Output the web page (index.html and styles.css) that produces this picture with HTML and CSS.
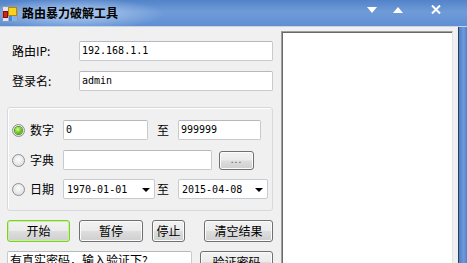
FILE: index.html
```html
<!DOCTYPE html>
<html lang="zh-CN">
<head>
<meta charset="utf-8">
<title>路由暴力破解工具</title>
<link rel="stylesheet" href="styles.css">
</head>
<body>
<div class="window">
  <div class="titlebar">
    <svg class="app-icon" width="16" height="16" viewBox="0 0 16 16">
      <rect x="0.5" y="0.5" width="15" height="15" fill="#dfe6ee" stroke="#8a9bb0"/>
      <rect x="1.5" y="5.5" width="4" height="6" fill="#d42020" stroke="#801010"/>
      <rect x="6.5" y="1.5" width="8" height="8" fill="#f7d21e" stroke="#b08a10"/>
      <rect x="6.5" y="10" width="4" height="5" fill="#4a86d8"/>
      <rect x="11" y="10" width="4" height="5" fill="#7fb0e8"/>
    </svg>
    <span class="title">路由暴力破解工具</span>
    <div class="controls">
      <svg class="ctl ctl-down" width="10" height="6" viewBox="0 0 10 6"><path d="M0 0H10L5 6Z" fill="#fff"/></svg>
      <svg class="ctl ctl-up" width="10" height="6" viewBox="0 0 10 6"><path d="M0 6H10L5 0Z" fill="#fff"/></svg>
      <svg class="ctl ctl-close" width="10" height="9" viewBox="0 0 10 9"><path d="M1 0.5L9 8.5M9 0.5L1 8.5" stroke="#fff" stroke-width="2"/></svg>
    </div>
  </div>
  <div class="client">
    <div class="left">
      <div class="field-row">
        <span class="field-label">路由IP:</span>
        <div class="textbox wide mono">192.168.1.1</div>
      </div>
      <div class="field-row">
        <span class="field-label">登录名:</span>
        <div class="textbox wide mono">admin</div>
      </div>
      <div class="groupbox">
        <div class="g-row">
          <span class="radio checked"></span>
          <span class="r-label">数字</span>
          <div class="textbox num mono">0</div>
          <span class="to">至</span>
          <div class="textbox num2 mono">999999</div>
        </div>
        <div class="g-row">
          <span class="radio"></span>
          <span class="r-label">字典</span>
          <div class="textbox dict"></div>
          <div class="button dots">...</div>
        </div>
        <div class="g-row date-row">
          <span class="radio"></span>
          <span class="r-label">日期</span>
          <div class="datebox d1"><span class="mono">1970-01-01</span><span class="arrow"></span></div>
          <span class="to to-date">至</span>
          <div class="datebox d2"><span class="mono">2015-04-08</span><span class="arrow"></span></div>
        </div>
      </div>
      <div class="btn-row">
        <div class="button start">开始</div>
        <div class="button pause">暂停</div>
        <div class="button stop">停止</div>
        <div class="button clear">清空结果</div>
      </div>
      <div class="verify-row">
        <div class="textbox verify">有真实密码，输入验证下?</div>
        <div class="button verify-btn">验证密码</div>
      </div>
    </div>
    <div class="output"></div>
    <div class="gap"></div>
    <div class="frame"></div>
  </div>
</div>
</body>
</html>
```

FILE: styles.css
```css
* { box-sizing: border-box; }
html, body { margin: 0; padding: 0; }
body {
  width: 467px;
  height: 263px;
  overflow: hidden;
  background: #f0f0f0;
  font-family: "Noto Sans CJK SC", "Noto Sans", sans-serif;
  font-size: 12px;
  color: #000;
}
.window { width: 467px; height: 263px; display: flex; flex-direction: column; }

.titlebar {
  height: 27px;
  flex: none;
  display: flex;
  align-items: center;
  position: relative;
  background:
    radial-gradient(ellipse 90px 16px at 75px 14px, rgba(190,214,244,0.85), rgba(190,214,244,0) 100%),
    linear-gradient(#5283c9 0%, #6f9bd8 45%, #5f8fd3 100%);
  border-bottom: 1px solid #c9d4e2;
}
.app-icon { margin-left: 2px; margin-top: 1px; flex: none; }
.title { margin-left: 4px; font-weight: bold; font-size: 12px; line-height: 14px; letter-spacing: 0; }
.controls { margin-left: auto; display: flex; align-items: center; height: 27px; }
.ctl { display: block; }
.ctl-down { margin-right: 16px; margin-top: -6px; }
.ctl-up { margin-right: 28px; margin-top: -6px; }
.ctl-close { margin-right: 26px; margin-top: -8px; }

.client { flex: 1; display: flex; min-height: 0; background: #f0f0f0; }
.left { width: 281px; flex: none; padding: 14px 0 0 7px; }

.mono { font-family: "DejaVu Sans Mono", "Liberation Mono", monospace; font-size: 10px; }

.field-row { display: flex; align-items: center; height: 20px; margin-bottom: 10px; }
.field-label { width: 72px; padding-left: 5px; line-height: 14px; }
.textbox {
  height: 20px;
  background: #fff;
  border: 1px solid #c7cbd0;
  border-top-color: #b5b9be;
  border-radius: 2px;
  padding: 2px 0 0 2px;
  line-height: 14px;
}
.textbox.wide { width: 194px; }
.field-row + .groupbox { margin-top: 6px; }
.field-row:nth-of-type(2) { margin-bottom: 16px; }

.groupbox {
  width: 266px;
  height: 104px;
  border: 1px solid #d5d9de;
  border-radius: 3px;
  box-shadow: inset 1px 1px 0 #fff;
  padding: 12px 0 0 4px;
}
.g-row { display: flex; align-items: center; height: 20px; margin-bottom: 10px; }
.g-row.date-row { margin-top: -1px; }
.radio {
  width: 13px; height: 13px; flex: none;
  border-radius: 50%;
  border: 1px solid #8e8f8f;
  background: radial-gradient(circle at 50% 40%, #fdfdfd 0%, #e6e6e6 60%, #d0d0d0 100%);
  position: relative;
}
.radio.checked::after {
  content: "";
  position: absolute;
  left: 2px; top: 2px;
  width: 7px; height: 7px;
  border-radius: 50%;
  background: radial-gradient(circle at 40% 35%, #d8ff9a 0%, #6cc419 55%, #2f8a0a 100%);
  box-shadow: 0 0 0 1px #4a9a18;
}
.r-label { width: 38px; padding-left: 5px; line-height: 14px; }
.textbox.num { width: 85px; }
.to { margin: 0 9px 0 9px; line-height: 14px; }
.to.to-date { margin-left: 2px; }
.textbox.num2 { width: 83px; }
.textbox.dict { width: 149px; }

.button {
  height: 22px;
  border: 1px solid #707070;
  border-radius: 3px;
  background: linear-gradient(#f2f2f2 0%, #ebebeb 48%, #dddddd 52%, #cfcfcf 100%);
  box-shadow: inset 0 0 0 1px #fcfcfc;
  display: flex; align-items: center; justify-content: center;
  line-height: 14px;
}
.button.dots { width: 35px; height: 19px; margin-left: 7px; font-size: 10px; color: #555; letter-spacing: 1px; padding-bottom: 2px; }

.datebox {
  height: 20px;
  background: #fff;
  border: 1px solid #c7cbd0;
  border-radius: 2px;
  display: flex; align-items: center;
  padding-left: 3px;
  position: relative;
}
.datebox.d1 { width: 92px; }
.datebox.d2 { width: 90px; }
.arrow {
  position: absolute;
  right: 4px; top: 8px;
  width: 0; height: 0;
  border-left: 4px solid transparent;
  border-right: 4px solid transparent;
  border-top: 4px solid #000;
}

.btn-row { display: flex; margin-top: 9px; height: 22px; }
.button.start {
  width: 63px;
  border-color: #7ccf2f;
  box-shadow: inset 0 0 0 1px #c6f09a;
}
.button.pause { width: 64px; margin-left: 9px; }
.button.stop { width: 33px; margin-left: 9px; }
.button.clear { width: 69px; margin-left: 19px; }

.verify-row { display: flex; margin-top: 9px; height: 22px; }
.textbox.verify {
  width: 185px; height: 22px;
  font-family: "Noto Sans CJK SC", sans-serif; font-size: 12px;
  padding: 1px 0 0 2px; border-radius: 2px;
}
.button.verify-btn { width: 73px; margin-left: 8px; }

.output {
  width: 172px;
  margin-top: 4px;
  background: #fff;
  border-top: 1px solid #a0a0a0;
  border-left: 1px solid #a0a0a0;
  border-right: 1px solid #e3e3e3;
  box-shadow: inset 1px 1px 0 #696969;
}
.gap { width: 5px; flex: none; }
.frame {
  width: 9px; flex: none;
  border-left: 1px solid #2c3e5a;
  background: linear-gradient(90deg, #4f7fc8, #6f9adb 60%, #4f80c8);
}
```
